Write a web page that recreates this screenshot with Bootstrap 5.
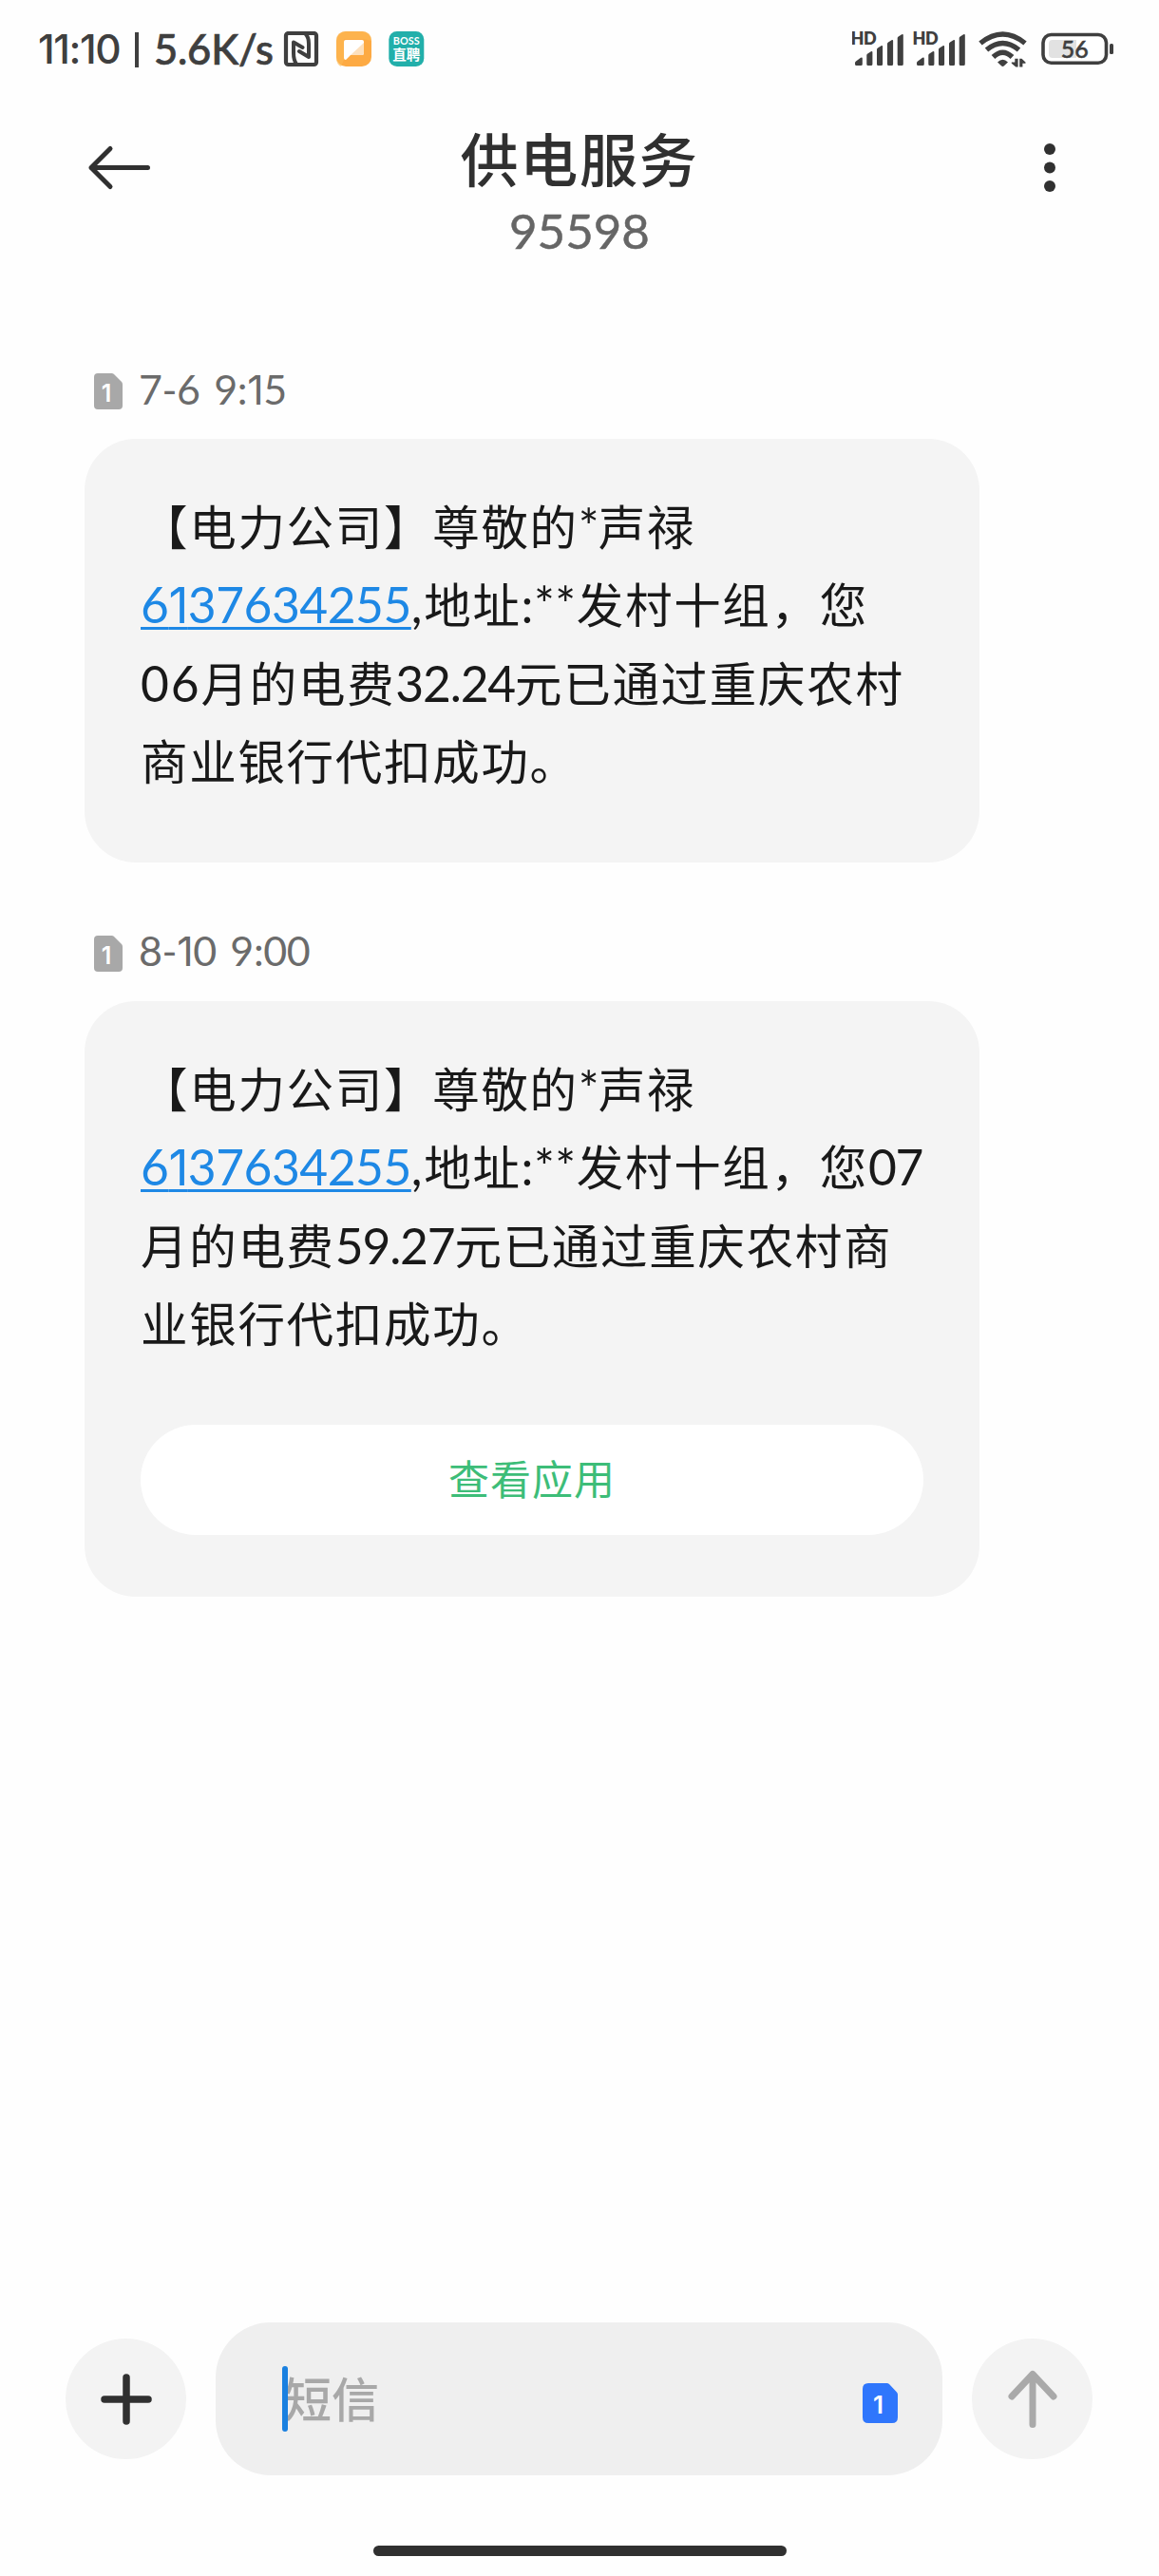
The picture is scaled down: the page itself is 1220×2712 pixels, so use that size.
<!DOCTYPE html>
<html lang="zh-CN">
<head>
<meta charset="utf-8">
<meta name="viewport" content="width=device-width, initial-scale=1">
<title>供电服务</title>
<link href="https://cdn.jsdelivr.net/npm/bootstrap@5.3.0/dist/css/bootstrap.min.css" rel="stylesheet">
<style>
  body { font-family: Lato, "Noto Sans CJK SC", sans-serif; color: #191919; background: #fefefe; }
  svg { display: block; flex: none; }
  svg text { font-family: Lato, "Noto Sans CJK SC", sans-serif; }
  .one, svg text.one { font-family: Inter, sans-serif; font-style: normal; }
  .phone { width: 1220px; height: 2712px; overflow: hidden; }
  .status-bar { height: 104px; padding: 0 47px 0 40px; color: #3f3f3f; }
  .clock { font-size: 43.5px; line-height: 60px; font-weight: 500; white-space: pre; -webkit-text-stroke: .7px #3f3f3f; }
  .clock-time { width: 102px; font-family: Inter, sans-serif; font-size: 42.5px; letter-spacing: -1.4px; -webkit-text-stroke: 0; }
  .clock-rate { letter-spacing: -.2px; width: 135px; padding-bottom: 2px; }
  .clock-bar { width: 4px; height: 37px; background: #3f3f3f; margin-right: 16px; }
  .title-bar { height: 230px; padding: 28px 92px 0; color: #303030; }
  .title-bar h1 { font-size: 61px; line-height: 74px; letter-spacing: 1.8px; font-weight: 500; }
  .title-bar .sender { font-size: 51px; line-height: 60px; letter-spacing: 0; color: #666; margin-top: 7px; -webkit-text-stroke: .5px #666; }
  .thread { padding: 50px 89px 0; }
  .stamp { height: 56px; margin-bottom: 22px; padding-left: 10px; gap: 17px; font-size: 43px; line-height: 56px; color: #6b6b6b; }
  .stamp time { padding-bottom: 5px; letter-spacing: -.4px; word-spacing: 4px; }
  .bubble + .stamp { margin-top: 68px; }
  .bubble { width: 942px; border-radius: 54px; background: #f4f4f4; padding: 52px 59px 64.8px; }
  .bubble p { font-size: 49.5px; line-height: 82.3px; letter-spacing: 1.7px; white-space: nowrap; }
  .bubble p a, .bubble p span { font-size: 51.5px; line-height: 1; }
  .bubble p a { color: #1e88e5; letter-spacing: -.5px; text-decoration-thickness: 3px; text-underline-offset: 4px; text-decoration-skip-ink: none; }
  .bubble p .star { letter-spacing: -1px; }
  .bubble p .address { letter-spacing: .5px; }
  .month { letter-spacing: 1.9px; }
  .amount { letter-spacing: -1.2px; }
  .open-app { height: 116px; margin-top: 65px; font-size: 43px; letter-spacing: 1px; color: #3dbd78; background: #fff; }
  .composer { height: 161px; padding: 0 70px 0 69px; }
  .round-btn { width: 127px; height: 127px; background: #f3f3f3; }
  .entry { width: 765px; height: 161px; border-radius: 58px; background: #efefef; padding: 0 47px 0 70px; }
  .entry svg { margin-top: 9px; }
  .caret { width: 6px; height: 69px; border-radius: 3px; background: #1a80e0; margin-right: -4px; z-index: 1; }
  .hint { font-size: 50px; line-height: 70px; letter-spacing: 0; color: #a8a8a8; font-weight: 500; }
  .home-bar { width: 435px; height: 11px; background: #303030; margin: 74px auto 21px; }
</style>
</head>
<body>
<svg width="0" height="0" class="position-absolute">
  <defs>
    <g id="signal" fill="#3f3f3f">
      <text x="-1.6" y="47" font-size="18" font-weight="800" letter-spacing="-.4">HD</text>
      <path d="M3 66.500Q3 65 4 64.500L9 60.800Q10.800 60 10.800 61.500V67.500Q10.800 69 9.300 69H4.500Q3 69 3 67.500Z"/>
      <path d="M15.300 58Q15.300 57 16.300 56.400L19.800 54.200Q21.400 53.500 21.400 55V67.500Q21.400 69 19.900 69H16.800Q15.300 69 15.300 67.500Z"/>
      <path d="M26 52Q26 51 27 50.400L30.500 48.200Q32.100 47.500 32.100 49V67.500Q32.100 69 30.600 69H27.500Q26 69 26 67.500Z"/>
      <path d="M37 46Q37 45 38 44.400L41.500 42.200Q43.100 41.500 43.100 43V67.500Q43.100 69 41.600 69H38.500Q37 69 37 67.500Z"/>
      <path d="M47.700 40Q47.700 39 48.700 38.400L52.200 36.200Q53.800 35.500 53.800 37V67.500Q53.800 69 52.300 69H49.200Q47.700 69 47.700 67.500Z"/>
    </g>
    <g id="sim">
      <path d="M4 0H18.500Q20 0 21 1L29 9Q30 10 30 11.500V34Q30 38 26 38H4Q0 38 0 34V4Q0 0 4 0Z"/>
      <text class="one" x="13" y="30" font-size="25" font-weight="600" text-anchor="middle" fill="#fff">1</text>
    </g>
  </defs>
</svg>
<div class="phone d-flex flex-column">

  <header class="status-bar d-flex align-items-center justify-content-between">
    <div class="clock d-flex align-items-center">
      <span class="clock-time">11:10</span><span class="clock-bar"></span><span class="clock-rate">5.6K/s</span>
      <svg width="150" height="38" viewBox="297 33 150 38">
        <rect x="301" y="35" width="32" height="33" rx="2.500" fill="none" stroke="#3f3f3f" stroke-width="4.200"/>
        <path d="M318.500 50L309 44.500V56Q309 63 312 67.500M315 54L325 60V46Q325 39 321.500 35.500" fill="none" stroke="#3f3f3f" stroke-width="4" stroke-linejoin="round" stroke-linecap="round"/>
        <rect x="354" y="33" width="37" height="37" rx="10" fill="#fdaa43"/>
        <path d="M354 43Q354 33 364 33H381Q391 33 391 43L382 41H362V63L359 70Q354 68 354 60Z" fill="#fdb955" opacity=".6"/>
        <path d="M364 42H381Q383 42 383 44V56Q383 58 381 58H369L364 63Q362 63 362 61V44Q362 42 364 42Z" fill="#fff"/>
        <path d="M383 45V56Q383 58 381 58H369Z" fill="#fde0bd"/>
        <rect x="409.300" y="33" width="37" height="37" rx="8.500" fill="#22afaa"/>
        <text x="427.800" y="46.700" font-size="10.800" font-weight="700" text-anchor="middle" letter-spacing="0" fill="#fff" textLength="28">BOSS</text>
        <text x="427.800" y="63" font-size="14.500" font-weight="700" text-anchor="middle" fill="#fff" letter-spacing="0">直聘</text>
      </svg>
    </div>
    <svg width="276" height="44" viewBox="898 30 276 44">
      <use href="#signal" x="898"/>
      <use href="#signal" x="963"/>
      <g fill="none" stroke="#3f3f3f" stroke-width="5.400">
        <path d="M1033 45.500Q1056.500 26.500 1080 45.500"/>
        <path d="M1039.500 52.500Q1056.500 38.500 1073.500 52.500"/>
        <path d="M1046.500 60Q1056.500 50.500 1066.500 60"/>
      </g>
      <path d="M1051 65.500Q1056.500 60 1062 65.500L1058 69.300Q1056.500 70.500 1055 69.300Z" fill="#3f3f3f"/>
      <path d="M1069.300 61.800H1072.600V70.500H1070.300L1065.800 66.800V65.500H1069.300ZM1074.200 70.500V61.800H1076.500L1080.500 65.500V66.800H1077.400V70.500Z" fill="#3f3f3f"/>
      <rect x="1099" y="36.500" width="66.500" height="29.800" rx="8.500" fill="#fff" stroke="#3f3f3f" stroke-width="3.600"/>
      <path d="M1109 42H1134V61H1109Q1105 61 1105 57V46Q1105 42 1109 42Z" fill="#e2e2e2"/>
      <rect x="1169" y="46" width="4" height="11" rx="1.500" fill="#3f3f3f"/>
      <text x="1132.200" y="60.800" font-size="25" font-weight="500" text-anchor="middle" fill="#3f3f3f" stroke="#3f3f3f" stroke-width=".5">56</text>
    </svg>
  </header>

  <nav class="title-bar d-flex justify-content-between align-items-start">
    <svg class="mt-3" width="68" height="56" viewBox="92 148 68 56" fill="none" stroke="#303030" stroke-width="5" stroke-linecap="round" stroke-linejoin="round">
      <path d="M155.500 176.500H96M116 156.500L96 176.500L116 196.500"/>
    </svg>
    <div class="text-center">
      <h1 class="mb-0">供电服务</h1>
      <div class="sender">95598</div>
    </div>
    <svg class="mt-3" width="68" height="56" viewBox="1060 148 68 56" fill="#303030">
      <circle cx="1105" cy="157" r="6"/><circle cx="1105" cy="176.500" r="6"/><circle cx="1105" cy="196" r="6"/>
    </svg>
  </nav>

  <main class="thread flex-grow-1">
    <div class="stamp d-flex align-items-center">
      <svg width="30" height="38" fill="#a8a8a8"><use href="#sim"/></svg>
      <time>7-6 9:<i class="one">1</i>5</time>
    </div>
    <section class="bubble">
      <p class="mb-0">【电力公司】尊敬的<span class="star">*</span>声禄<br><a href="#">6<i class="one">1</i>37634255</a><span>,</span>地址<span class="address">:**</span>发村十组，您<br><span class="month">06</span>月的电费<span class="amount">32.24</span>元已通过重庆农村<br>商业银行代扣成功。</p>
    </section>
    <div class="stamp d-flex align-items-center">
      <svg width="30" height="38" fill="#a8a8a8"><use href="#sim"/></svg>
      <time>8-<i class="one">1</i>0 9:00</time>
    </div>
    <section class="bubble">
      <p class="mb-0">【电力公司】尊敬的<span class="star">*</span>声禄<br><a href="#">6<i class="one">1</i>37634255</a><span>,</span>地址<span class="address">:**</span>发村十组，您<span class="amount">07</span><br>月的电费<span class="amount">59.27</span>元已通过重庆农村商<br>业银行代扣成功。</p>
      <button type="button" class="open-app btn w-100 rounded-pill border-0 p-0">查看应用</button>
    </section>
  </main>

  <footer>
    <div class="composer d-flex align-items-center justify-content-between">
      <button type="button" class="round-btn btn rounded-circle border-0 p-0 d-flex align-items-center justify-content-center" aria-label="添加">
        <svg width="54" height="54" stroke="#303030" stroke-width="7.500" stroke-linecap="round"><path d="M4 27H50M27 4V50"/></svg>
      </button>
      <div class="entry d-flex align-items-center">
        <span class="caret"></span><span class="hint">短信</span>
        <svg class="ms-auto" width="37" height="42" viewBox="0 0 37 42">
          <path d="M6 0H25.500Q27 0 28 1L36 9.500Q37 10.500 37 12V36Q37 42 31 42H6Q0 42 0 36V6Q0 0 6 0Z" fill="#2f76fc"/>
          <text class="one" x="16.500" y="31.500" font-size="26" font-weight="600" text-anchor="middle" fill="#fff">1</text>
        </svg>
      </div>
      <button type="button" class="round-btn btn rounded-circle border-0 p-0 d-flex align-items-center justify-content-center" aria-label="发送">
        <svg width="54" height="64" fill="none" stroke="#a9a9a9" stroke-width="7" stroke-linecap="round" stroke-linejoin="round"><path d="M27 58.500V5.500M5 29L27 5.500L49 29"/></svg>
      </button>
    </div>
    <div class="home-bar rounded-pill"></div>
  </footer>
</div>
<script src="https://cdn.jsdelivr.net/npm/bootstrap@5.3.0/dist/js/bootstrap.bundle.min.js"></script>
</body>
</html>
